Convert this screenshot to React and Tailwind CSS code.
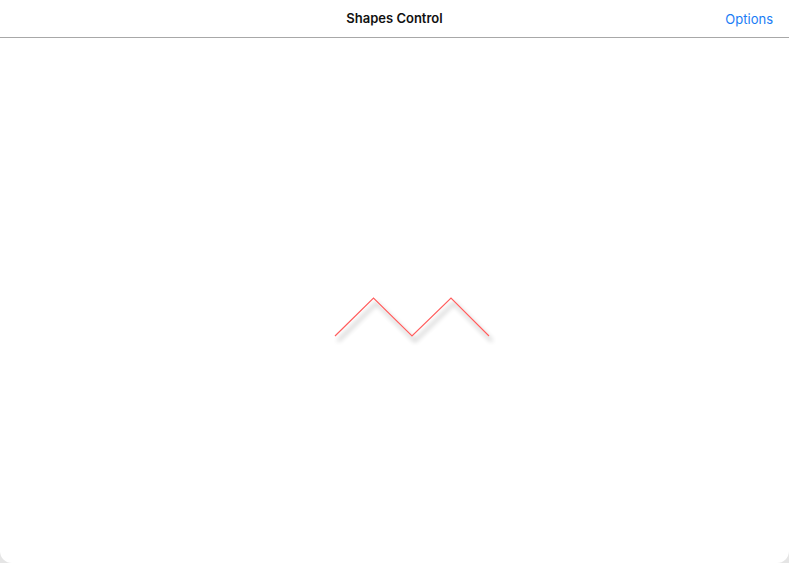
export default function App() {
  return (
    <div className="w-[789px] h-[563px] bg-[#e5e5e5]">
      <div className="w-[789px] h-[563px] bg-white flex flex-col overflow-hidden rounded-b-[12px] font-['Inter','Liberation_Sans',sans-serif]">
        <div className="h-[38px] shrink-0 border-b border-[#a8a8a8] flex items-center relative">
          <div className="flex-1 text-center text-[13px] font-semibold text-[#111]">Shapes Control</div>
          <div className="absolute right-[16px] top-[10px] text-[13px] text-[#1a7cf5]">Options</div>
        </div>
        <div className="flex-1 relative">
          <svg width="789" height="525" className="block">
            <defs>
              <filter id="sh" filterUnits="userSpaceOnUse" x="300" y="230" width="230" height="110">
                <feGaussianBlur in="SourceAlpha" stdDeviation="2.5" result="b" />
                <feOffset in="b" dx="3" dy="5" result="o" />
                <feComponentTransfer in="o" result="s">
                  <feFuncA type="linear" slope="0.45" />
                </feComponentTransfer>
                <feMerge>
                  <feMergeNode in="s" />
                  <feMergeNode in="SourceGraphic" />
                </feMerge>
              </filter>
            </defs>
            <polyline
              points="335,298 373.5,260 412,298 451,260 489,298"
              fill="none"
              stroke="#ff5e5e"
              strokeWidth="1.2"
              filter="url(#sh)"
            />
          </svg>
        </div>
      </div>
    </div>
  );
}
